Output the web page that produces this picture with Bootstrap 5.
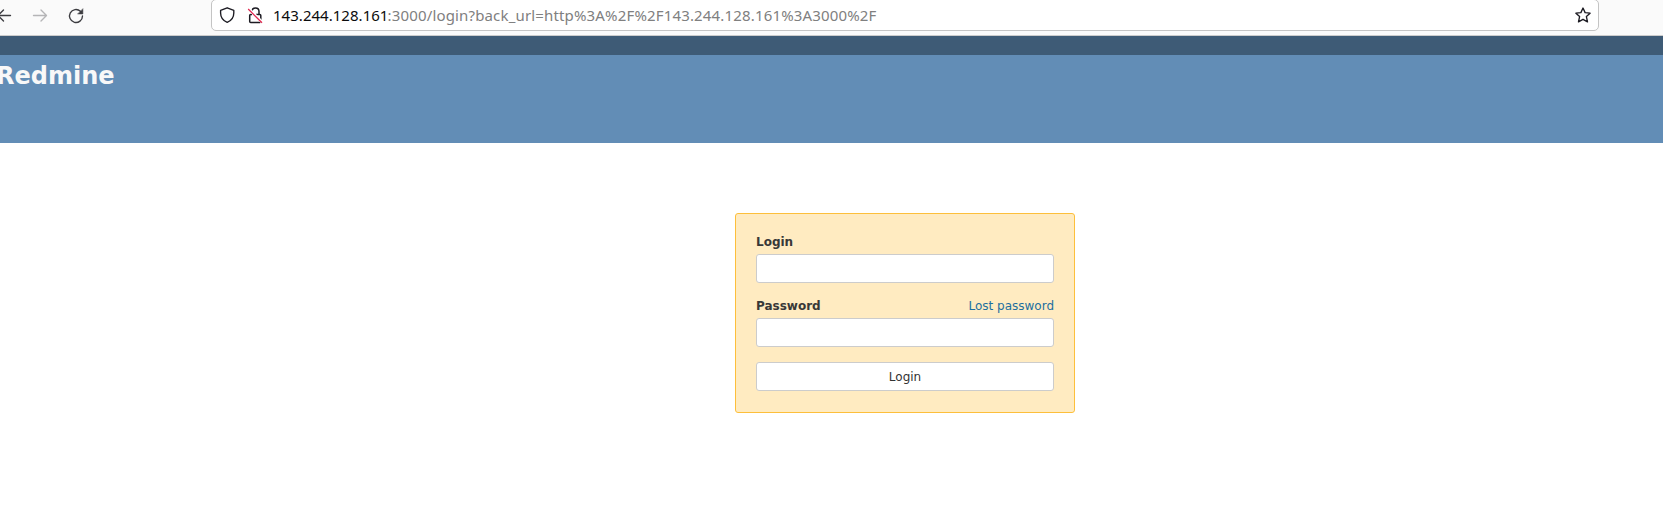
<!DOCTYPE html>
<html lang="en">
<head>
<meta charset="utf-8">
<title>Redmine</title>
<link href="https://cdn.jsdelivr.net/npm/bootstrap@5.3.0/dist/css/bootstrap.min.css" rel="stylesheet">
<style>
body{font-family:"DejaVu Sans",sans-serif;font-size:12px;line-height:18px;color:#333;overflow:hidden}
.toolbar{height:36px;background:#fafafa;border-bottom:1px solid #ccc}
.nav-icons{width:211px;height:31px}
.nav-icons svg,.address svg{display:block;flex:none}
.address{width:1388px;height:32px;margin-top:-1px;border:1px solid #c4c4c4;border-radius:5px;padding-left:7px}
.url{font-family:"Noto Sans","Open Sans",sans-serif;font-size:15px;line-height:20px;color:#808080;margin-left:9px;white-space:nowrap}
.url .host{color:#0c0c0d;display:inline-block;width:114.5px;letter-spacing:.03px}
.url .path{letter-spacing:.16px}
.star{margin-right:7px}
.top-menu{height:19px;background:#3e5b76}
.site-header{height:88px;background:#628db6}
.site-header h1{font-size:24px;line-height:30px;font-weight:700;color:#f8f8f8;margin:6px 0 0 -4px}
.login-box{width:340px;height:200px;margin:70px 0 0 735px;padding:19px 20px;background:#ffebc1;border:1px solid #fdbf3b;border-radius:3px}
.login-box label{font-weight:700;color:#383838}
.login-box .form-control,.login-box .btn{height:29px;border:1px solid #ccc;border-radius:3px;padding:0;font-size:12px;background:#fff;color:#333}
.login-box a{color:#1d6f9f}
</style>
</head>
<body class="bg-white">
<div class="toolbar d-flex">
  <div class="nav-icons">
    <svg width="211" height="31" fill="none" stroke="#3c3c40" stroke-width="1.35" stroke-linecap="round" stroke-linejoin="round">
      <path d="M-2 15.5H10.5M3.5 10L-2 15.5L3.5 21"/>
      <path stroke="#b5b5b7" d="M33.5 15.5H46M41 10L46.5 15.5L41 21"/>
      <path d="M80.4 11.2A6.5 6.5 0 1 0 82.5 16"/>
      <path fill="#3c3c40" stroke-width=".5" d="M82.9 9V14H77.9Z"/>
    </svg>
  </div>
  <div class="address d-flex align-items-center bg-white">
    <svg width="17" height="18" fill="none" stroke="#1c1b22" stroke-width="1.35" stroke-linejoin="round"><path d="M8.2 1.8L14.8 4.3V7C14.8 11.2 12.2 14.7 8.2 16.4C4.2 14.7 1.6 11.2 1.6 7V4.3Z"/></svg>
    <svg style="margin-left:11px" width="17" height="18" fill="none" stroke="#1c1b22" stroke-width="1.5" stroke-linejoin="round">
      <path d="M5 5.5C5 .8 12 .8 12 5.5V8.5M5 8.5H3.7Q2.7 8.5 2.7 9.5V15.4Q2.7 16.4 3.7 16.4H12.8Q13.8 16.4 13.8 15.4V9.5Q13.8 8.5 12.8 8.5H9"/>
      <path stroke="#fff" stroke-width="3" d="M1.5 2.6L15.2 16.3"/><path stroke="#e22850" stroke-width="1.3" d="M1.2 3L15 16.8"/>
    </svg>
    <div class="url"><span class="host">143.244.128.161</span><span class="path">:3000/login?back_url=http%3A%2F%2F143.244.128.161%3A3000%2F</span></div>
    <svg class="star ms-auto" width="16" height="18" viewBox="0 0 16 18" fill="none" stroke="#1c1b22" stroke-width="1.35" stroke-linejoin="round"><path d="M8 2L10.1 6.6L15.1 7.2L11.4 10.6L12.5 15.9L8 13.3L3.5 15.9L4.6 10.6L.9 7.2L5.9 6.6Z"/></svg>
  </div>
</div>
<div class="top-menu"></div>
<header class="site-header d-flex"><h1>Redmine</h1></header>
<main>
  <form class="login-box">
    <label class="d-block" for="username">Login</label>
    <input class="form-control" id="username" style="margin-top:3px" type="text">
    <div class="d-flex justify-content-between" style="margin:14px 0 3px"><label for="password">Password</label><a class="text-decoration-none" href="#">Lost password</a></div>
    <input class="form-control" id="password" type="password">
    <button class="btn w-100 d-block" style="margin-top:15px" type="button">Login</button>
  </form>
</main>
<script src="https://cdn.jsdelivr.net/npm/bootstrap@5.3.0/dist/js/bootstrap.bundle.min.js"></script>
</body>
</html>
